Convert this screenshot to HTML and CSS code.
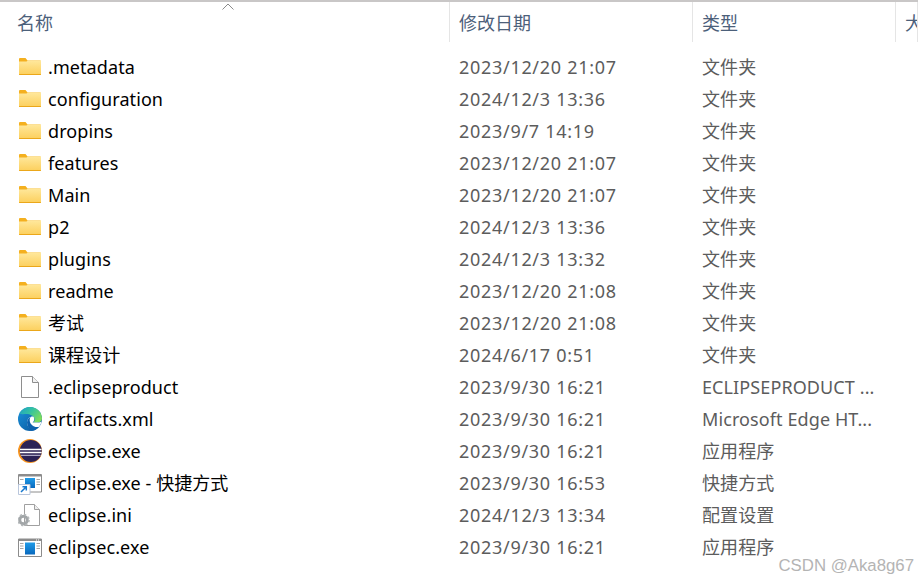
FILE: index.html
```html
<!DOCTYPE html>
<html lang="zh-CN">
<head>
    <meta charset="UTF-8">
    <title>eclipse</title>
    <link rel="stylesheet" href="styles.css">
</head>
<body>
    <svg class="defs" width="0" height="0">
        <defs>
            <linearGradient id="folderFill" x1="0" y1="0" x2="0" y2="1">
                <stop offset="0" stop-color="#ffe89c"/>
                <stop offset="1" stop-color="#fccf5c"/>
            </linearGradient>
            <linearGradient id="edgeGreen" x1="0" y1="0" x2="1" y2=".6">
                <stop offset="0" stop-color="#1d9fc8"/>
                <stop offset=".5" stop-color="#35c3a0"/>
                <stop offset="1" stop-color="#7cdc5c"/>
            </linearGradient>
            <linearGradient id="edgeBlue" x1="0" y1="0" x2="1" y2="1">
                <stop offset="0" stop-color="#1a93dc"/>
                <stop offset="1" stop-color="#0a5398"/>
            </linearGradient>
            <linearGradient id="exeFill" x1="0" y1="0" x2="0" y2="1">
                <stop offset="0" stop-color="#1f9be8"/>
                <stop offset="1" stop-color="#0868bd"/>
            </linearGradient>
            <symbol id="i-folder" viewBox="0 0 24 24">
                <path d="M1 4a1 1 0 0 1 1-1h5.500l2 2.500H22a1 1 0 0 1 1 1V19a1 1 0 0 1-1 1H2a1 1 0 0 1-1-1z" fill="#f4b01f"/>
                <path d="M1 6.500h7.500l1.500-1h13V19a1 1 0 0 1-1 1H2a1 1 0 0 1-1-1z" fill="url(#folderFill)"/>
                <path d="M1 19h22v.2a.8.8 0 0 1-.8.8H1.800a.8.8 0 0 1-.8-.8z" fill="#eba71a"/>
            </symbol>
            <symbol id="i-file" viewBox="0 0 24 24">
                <path d="M3.500 1.500h11l6 6v15h-17z" fill="#fff" stroke="#8e8e8e"/>
                <path d="M14.500 1.500v6h6" fill="#f2f2f2" stroke="#8e8e8e"/>
            </symbol>
            <symbol id="i-edge" viewBox="0 0 24 24">
                <circle cx="12" cy="12" r="12" fill="url(#edgeBlue)"/>
                <path d="M1.500 6.500C3.500 2.500 7.500 0 12 0c6.800 0 12 5.200 12 11.500 0 2.500-2 4-5 4h-4c1.500-1 2-2.500 1.500-4C15.500 8.500 12 7 8.500 7c-2.500 0-5 .5-7-.5z" fill="url(#edgeGreen)"/>
                <path d="M9 15.500c0-3.500 3-6.300 6.200-6 .9 1 1.300 2.500.8 4-.3 1-1 1.600-1.500 2h5.800c1 0 2.500-.3 3.200-1-.7 3.500-2.700 6-5.500 7.500-1.300.2-3.500.3-5 0C10.800 21.300 9 18.500 9 15.500z" fill="#fff"/>
                <path d="M9 15.500c0-3 2-5 4.200-5.600C11 11 11.500 15 13 17c1.500 2.200 4.500 3.500 8 3-2 2.200-4.500 3.800-7.500 3.900C11 22 9 19 9 15.500z" fill="#0d62ae"/>
            </symbol>
            <symbol id="i-eclipse" viewBox="0 0 24 24">
                <circle cx="12" cy="12" r="12" fill="#f7941e"/>
                <circle cx="12.800" cy="12" r="11" fill="#2c2255"/>
                <path d="M2 9.800h21.600v1.500H2zM1.900 12.700h21.800v1.500H1.900z" fill="#fff"/>
                <path d="M3 15.800h19.600v1H3z" fill="#cfcbe0"/>
            </symbol>
            <symbol id="i-exe" viewBox="0 0 24 24">
                <path d="M.5 4h23v17.500H.5z" fill="#fff" stroke="#8c8c8c"/>
                <path d="M1 4h22v2H1z" fill="#8c8c8c"/>
                <path d="M18 4.500h1v1h-1zM20 4.500h1v1h-1z" fill="#fff"/>
                <path d="M7 7.500h10v12H7z" fill="url(#exeFill)"/>
                <path d="M2 8h3.500v1H2zM2 10.500h3.500v1H2zM2 13h3.500v1H2zM18.500 8H22v1h-3.500zM18.500 10.500H22v1h-3.500zM18.500 13H22v1h-3.500z" fill="#a5a5a5"/>
            </symbol>
            <symbol id="i-shortcut" viewBox="0 0 24 24">
                <path d="M.5 3.500h23v17.500H.5z" fill="#fff" stroke="#8c8c8c"/>
                <path d="M1 3.500h22v2H1z" fill="#8c8c8c"/>
                <path d="M7 7h10v10H7z" fill="url(#exeFill)"/>
                <path d="M2 8h3.500v1H2zM18.500 8H22v1h-3.500zM18.500 10.500H22v1h-3.500zM18.500 13H22v1h-3.500z" fill="#a5a5a5"/>
                <path d="M.5 13.500h11.500v10H.5z" fill="#fff" stroke="#b9c6dc"/>
                <path d="M3 21l5-5M4.500 15.800h3.800v3.800" fill="none" stroke="#1678cf" stroke-width="1.500"/>
            </symbol>
            <symbol id="i-ini" viewBox="0 0 24 24">
                <path d="M6.500 1.500h10l5 5v16h-15z" fill="#fff" stroke="#a0a0a0"/>
                <path d="M16.500 1.500v5h5" fill="#eee" stroke="#a0a0a0"/>
                <circle cx="5.500" cy="17" r="3.800" fill="none" stroke="#a2a6a8" stroke-width="3"/>
                <circle cx="5.500" cy="17" r="5.500" fill="none" stroke="#b4b8ba" stroke-width="1.600" stroke-dasharray="2.200 2.100"/>
            </symbol>
        </defs>
    </svg>

    <div class="explorer">
        <div class="col-head">
            <div class="head-cell head-name">名称</div>
            <div class="head-cell">修改日期</div>
            <div class="head-cell">类型</div>
            <div class="head-cell">大小</div>
            <svg class="sort-caret" width="14" height="7" viewBox="0 0 14 7"><path d="M1.500 6.500L7 1l5.500 5.500" fill="none" stroke="#8a8a8a" stroke-width="1"/></svg>
        </div>

        <div class="rows">
            <div class="row"><span class="name"><svg class="icon"><use href="#i-folder"/></svg>.metadata</span><span class="cell date">2023/12/20 21:07</span><span class="cell">文件夹</span></div>
            <div class="row"><span class="name"><svg class="icon"><use href="#i-folder"/></svg>configuration</span><span class="cell date">2024/12/3 13:36</span><span class="cell">文件夹</span></div>
            <div class="row"><span class="name"><svg class="icon"><use href="#i-folder"/></svg>dropins</span><span class="cell date">2023/9/7 14:19</span><span class="cell">文件夹</span></div>
            <div class="row"><span class="name"><svg class="icon"><use href="#i-folder"/></svg>features</span><span class="cell date">2023/12/20 21:07</span><span class="cell">文件夹</span></div>
            <div class="row"><span class="name"><svg class="icon"><use href="#i-folder"/></svg>Main</span><span class="cell date">2023/12/20 21:07</span><span class="cell">文件夹</span></div>
            <div class="row"><span class="name"><svg class="icon"><use href="#i-folder"/></svg>p2</span><span class="cell date">2024/12/3 13:36</span><span class="cell">文件夹</span></div>
            <div class="row"><span class="name"><svg class="icon"><use href="#i-folder"/></svg>plugins</span><span class="cell date">2024/12/3 13:32</span><span class="cell">文件夹</span></div>
            <div class="row"><span class="name"><svg class="icon"><use href="#i-folder"/></svg>readme</span><span class="cell date">2023/12/20 21:08</span><span class="cell">文件夹</span></div>
            <div class="row"><span class="name"><svg class="icon"><use href="#i-folder"/></svg>考试</span><span class="cell date">2023/12/20 21:08</span><span class="cell">文件夹</span></div>
            <div class="row"><span class="name"><svg class="icon"><use href="#i-folder"/></svg>课程设计</span><span class="cell date">2024/6/17 0:51</span><span class="cell">文件夹</span></div>
            <div class="row"><span class="name"><svg class="icon"><use href="#i-file"/></svg>.eclipseproduct</span><span class="cell date">2023/9/30 16:21</span><span class="cell">ECLIPSEPRODUCT ...</span></div>
            <div class="row"><span class="name"><svg class="icon"><use href="#i-edge"/></svg>artifacts.xml</span><span class="cell date">2023/9/30 16:21</span><span class="cell">Microsoft Edge HT...</span></div>
            <div class="row"><span class="name"><svg class="icon"><use href="#i-eclipse"/></svg>eclipse.exe</span><span class="cell date">2023/9/30 16:21</span><span class="cell">应用程序</span></div>
            <div class="row"><span class="name"><svg class="icon"><use href="#i-shortcut"/></svg>eclipse.exe - 快捷方式</span><span class="cell date">2023/9/30 16:53</span><span class="cell">快捷方式</span></div>
            <div class="row"><span class="name"><svg class="icon"><use href="#i-ini"/></svg>eclipse.ini</span><span class="cell date">2024/12/3 13:34</span><span class="cell">配置设置</span></div>
            <div class="row"><span class="name"><svg class="icon"><use href="#i-exe"/></svg>eclipsec.exe</span><span class="cell date">2023/9/30 16:21</span><span class="cell">应用程序</span></div>
        </div>

        <div class="watermark">CSDN @Aka8g67</div>
    </div>
</body>
</html>
```

FILE: styles.css
```css
html, body {
    margin: 0;
    height: 100%;
    overflow: hidden;
    background: #fff;
}
body {
    font-family: "Noto Sans", "Noto Sans CJK SC", sans-serif;
    font-size: 18px;
    color: #000;
}
.defs {
    display: block;
}
.explorer {
    position: relative;
    height: 582px;
    border-top: 2px solid #c9c7c7;
    box-sizing: border-box;
    overflow: hidden;
}
.col-head {
    display: grid;
    grid-template-columns: 450px 243px 203px 1fr;
    height: 40px;
}
.head-cell {
    padding-left: 9px;
    line-height: 42px;
    color: #4c607a;
    border-right: 1px solid #e5e5e5;
    white-space: nowrap;
    overflow: hidden;
}
.head-name {
    padding-left: 17px;
}
.sort-caret {
    position: absolute;
    left: 221px;
    top: 1px;
}
.rows {
    padding-top: 9px;
}
.row {
    display: grid;
    grid-template-columns: 450px 243px 1fr;
    height: 32px;
    line-height: 32px;
}
.name {
    display: flex;
    align-items: center;
    gap: 6px;
    padding-left: 18px;
    white-space: nowrap;
    letter-spacing: 0.08px;
}
.icon {
    width: 24px;
    height: 24px;
    flex: none;
}
.cell {
    padding-left: 9px;
    color: #5c5c5c;
    white-space: nowrap;
    letter-spacing: 0.1px;
}
.date {
    letter-spacing: 0.7px;
}
.watermark {
    position: absolute;
    right: 4px;
    bottom: 4px;
    font-family: "Liberation Sans", sans-serif;
    font-size: 16.8px;
    line-height: 24px;
    color: #b4b4b4;
}
```
